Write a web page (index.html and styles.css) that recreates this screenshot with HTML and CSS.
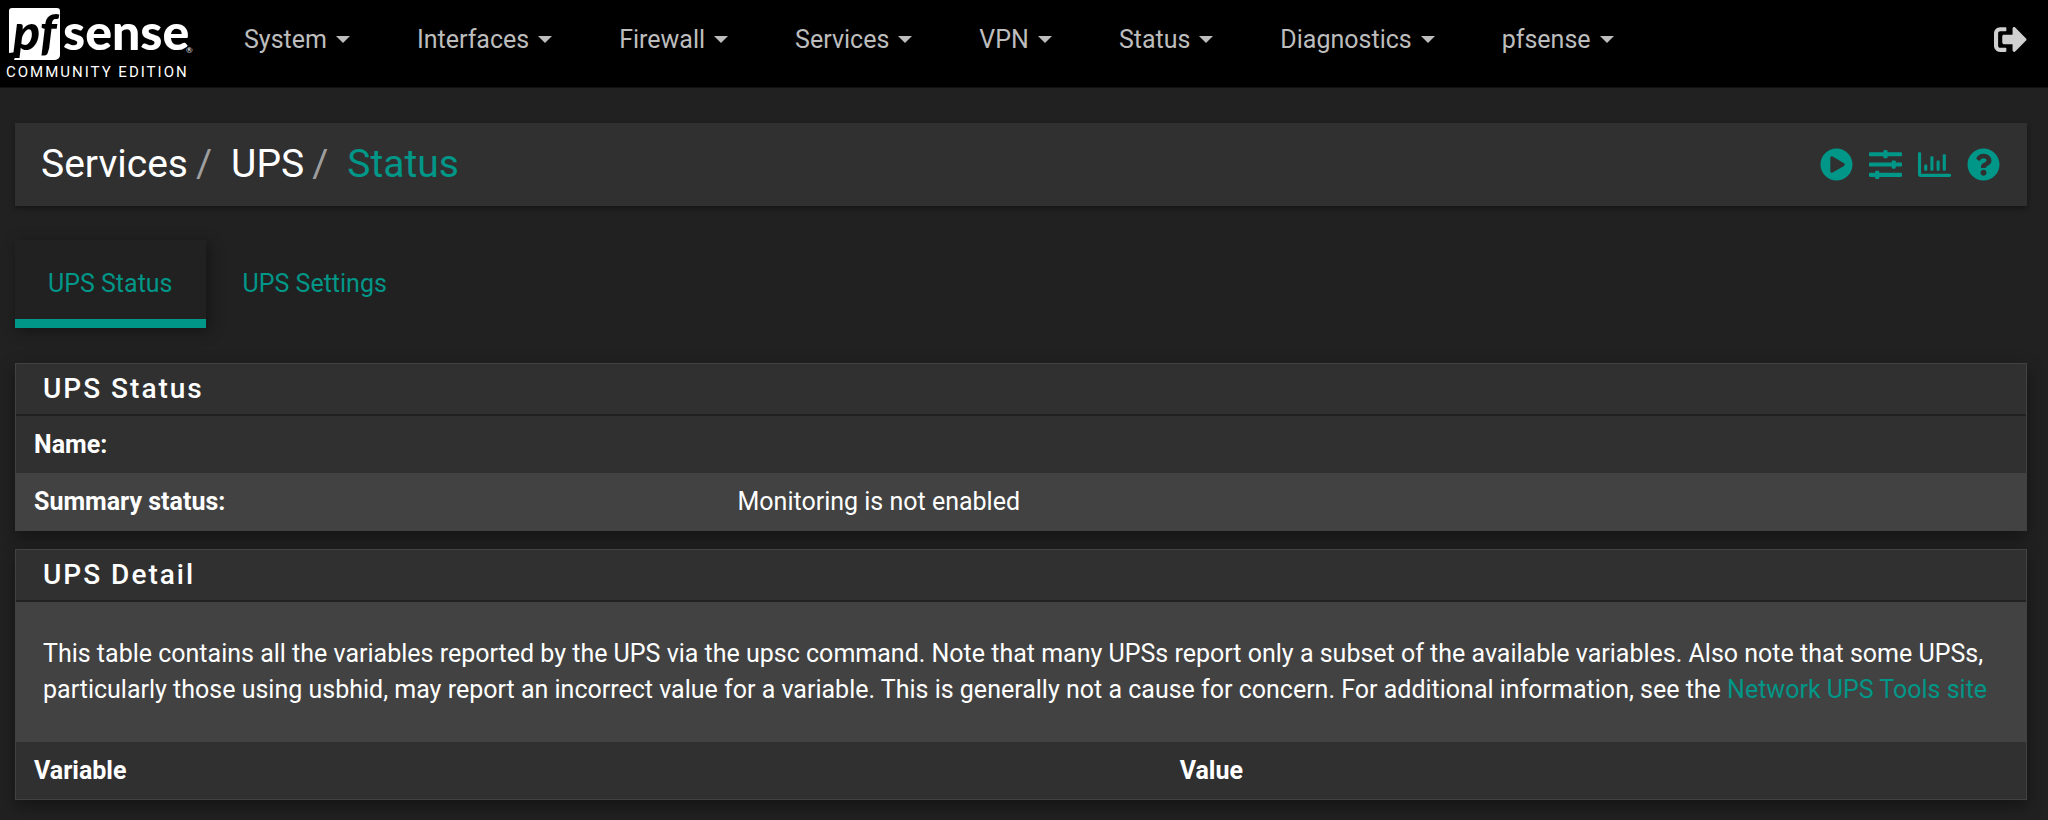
FILE: index.html
```html
<!DOCTYPE html>
<html lang="en">
<head>
    <meta charset="UTF-8">
    <meta name="viewport" content="width=device-width, initial-scale=1.0">
    <title>Services: UPS: Status</title>
    <link rel="stylesheet" href="styles.css">
</head>
<body>
    <header class="topnav">
        <a class="brand" href="#">
            <svg class="logo" viewBox="0 0 186 54" role="img" aria-label="pfSense">
                <path d="M4 1h45a3 3 0 0 1 3 3v44a5 5 0 0 1-5 5H6l3-8-8 1V4a3 3 0 0 1 3-3z" fill="#fff"/>
                <text class="logo-pf" x="5" y="43">pf</text>
                <text class="logo-sense" x="55" y="43">sense</text>
                <text class="logo-reg" x="178" y="46">®</text>
            </svg>
            <span class="edition">COMMUNITY EDITION</span>
        </a>
        <nav class="menu">
            <button class="menu-item" type="button">System<span class="caret"></span></button>
            <button class="menu-item" type="button">Interfaces<span class="caret"></span></button>
            <button class="menu-item" type="button">Firewall<span class="caret"></span></button>
            <button class="menu-item" type="button">Services<span class="caret"></span></button>
            <button class="menu-item" type="button">VPN<span class="caret"></span></button>
            <button class="menu-item" type="button">Status<span class="caret"></span></button>
            <button class="menu-item" type="button">Diagnostics<span class="caret"></span></button>
            <button class="menu-item" type="button">pfsense<span class="caret"></span></button>
        </nav>
        <a class="logout" href="#" aria-label="Logout">
            <svg class="icon" viewBox="0 0 512 512"><path d="M497 273L329 441c-15 15-41 4.500-41-17v-96H152c-13.300 0-24-10.700-24-24v-96c0-13.300 10.700-24 24-24h136V88c0-21.400 25.900-32 41-17l168 168c9.300 9.400 9.300 24.600 0 34zM192 436v-40c0-6.600-5.400-12-12-12H96c-17.700 0-32-14.300-32-32V160c0-17.700 14.300-32 32-32h84c6.600 0 12-5.400 12-12V76c0-6.600-5.400-12-12-12H96c-53 0-96 43-96 96v192c0 53 43 96 96 96h84c6.600 0 12-5.400 12-12z"/></svg>
        </a>
    </header>

    <main class="container">
        <div class="page-header">
            <ol class="breadcrumb">
                <li>Services</li>
                <li><a href="#">UPS</a></li>
                <li><a class="current" href="#">Status</a></li>
            </ol>
            <div class="context-links">
                <a href="#" aria-label="Start service">
                    <svg class="icon" viewBox="0 0 512 512"><path d="M256 8C119 8 8 119 8 256s111 248 248 248 248-111 248-248S393 8 256 8zm115.700 272l-176 101c-15.800 8.800-35.700-2.500-35.700-21V152c0-18.400 19.800-29.800 35.700-21l176 107c16.400 9.200 16.400 32.900 0 42z"/></svg>
                </a>
                <a href="#" aria-label="Related settings">
                    <svg class="icon" viewBox="0 0 512 512"><path d="M496 384H160v-16c0-8.800-7.200-16-16-16h-32c-8.800 0-16 7.200-16 16v16H16c-8.800 0-16 7.200-16 16v32c0 8.800 7.200 16 16 16h80v16c0 8.800 7.200 16 16 16h32c8.800 0 16-7.200 16-16v-16h336c8.800 0 16-7.200 16-16v-32c0-8.800-7.200-16-16-16zm0-160h-80v-16c0-8.800-7.200-16-16-16h-32c-8.800 0-16 7.200-16 16v16H16c-8.800 0-16 7.200-16 16v32c0 8.800 7.200 16 16 16h336v16c0 8.800 7.200 16 16 16h32c8.800 0 16-7.200 16-16v-16h80c8.800 0 16-7.200 16-16v-32c0-8.800-7.200-16-16-16zm0-160H288V48c0-8.800-7.200-16-16-16h-32c-8.800 0-16 7.200-16 16v16H16C7.200 64 0 71.200 0 80v32c0 8.800 7.200 16 16 16h208v16c0 8.800 7.200 16 16 16h32c8.800 0 16-7.200 16-16v-16h208c8.800 0 16-7.200 16-16V80c0-8.800-7.200-16-16-16z"/></svg>
                </a>
                <a href="#" aria-label="Related status">
                    <svg class="icon" viewBox="0 0 512 512"><path d="M397 352h22q13 0 13-13V109q0-13-13-13h-22q-13 0-13 13v230q0 13 13 13zM205 352h22q13 0 13-13V141q0-13-13-13h-22q-13 0-13 13v198q0 13 13 13zM301 352h22q13 0 13-13V205q0-13-13-13h-22q-13 0-13 13v134q0 13 13 13zM109 352h22q13 0 13-13v-70q0-13-13-13h-22q-13 0-13 13v70q0 13 13 13zM496 400H48V80q0-16-16-16H16Q0 64 0 80v336q0 32 32 32h464q16 0 16-16v-16q0-16-16-16z"/></svg>
                </a>
                <a href="#" aria-label="Help">
                    <svg class="icon" viewBox="0 0 512 512"><path d="M504 256c0 137-111 248-248 248S8 393 8 256C8 119 119 8 256 8s248 111 248 248zM262.700 90c-54.500 0-89.300 23-116.600 63.800-3.500 5.300-2.300 12.400 2.700 16.200l34.700 26.300c5.200 4 12.600 3 16.700-2.100 17.800-22.700 30.100-35.800 57.300-35.800 20.400 0 45.700 13.100 45.700 33 0 15-12.400 22.600-32.500 34C247.100 238.500 216 255 216 296v4c0 6.600 5.400 12 12 12h56c6.600 0 12-5.400 12-12v-1.300c0-28.500 83.200-29.700 83.200-106.700 0-58-60.200-102-116.500-102zM256 338c-25.400 0-46 20.600-46 46s20.600 46 46 46 46-20.600 46-46-20.600-46-46-46z"/></svg>
                </a>
            </div>
        </div>

        <nav class="tabs">
            <a class="tab active" href="#">UPS Status</a>
            <a class="tab" href="#">UPS Settings</a>
        </nav>

        <section class="panel">
            <h2 class="panel-heading">UPS Status</h2>
            <table class="table status-table">
                <tbody>
                    <tr><th scope="row">Name:</th><td></td></tr>
                    <tr><th scope="row">Summary status:</th><td>Monitoring is not enabled</td></tr>
                </tbody>
            </table>
        </section>

        <section class="panel">
            <h2 class="panel-heading">UPS Detail</h2>
            <p class="panel-text">This table contains all the variables reported by the UPS via the upsc command. Note that many UPSs report only a subset of the available variables. Also note that some UPSs, particularly those using usbhid, may report an incorrect value for a variable. This is generally not a cause for concern. For additional information, see the <a href="#">Network UPS Tools site</a></p>
            <table class="table detail-table">
                <thead>
                    <tr><th scope="col">Variable</th><th scope="col">Value</th></tr>
                </thead>
            </table>
        </section>
    </main>
</body>
</html>
```

FILE: styles.css
```css
* {
    box-sizing: border-box;
}

body {
    margin: 0;
    background-color: #212121;
    color: #fff;
    font-family: Roboto, "Liberation Sans", sans-serif;
    font-size: 25px;
    line-height: 36px;
}

a {
    color: #009688;
    text-decoration: none;
}

.icon {
    display: block;
    width: 33px;
    height: 33px;
    fill: currentColor;
}

/* Top navigation */
.topnav {
    display: flex;
    align-items: center;
    height: 88px;
    padding: 0 21px 8px 6px;
    background-color: #000;
    border-bottom: 1px solid #111;
}

.brand {
    display: flex;
    flex-direction: column;
    align-self: flex-start;
    width: 204px;
    padding-top: 7px;
    color: #fff;
}

.logo {
    display: block;
    width: 186px;
    height: 54px;
    margin-left: 2px;
    overflow: visible;
}

.logo text {
    font-family: Lato, sans-serif;
    font-weight: 900;
    fill: #fff;
}

.logo .logo-pf {
    font-size: 50px;
    font-style: italic;
    fill: #000;
}

.logo-sense {
    font-size: 50px;
}

.logo .logo-reg {
    font-size: 8px;
    font-weight: 400;
}

.edition {
    font-size: 15px;
    line-height: 22px;
    letter-spacing: 2px;
    white-space: nowrap;
}

.menu {
    display: flex;
    flex: 1;
}

.menu-item {
    display: flex;
    align-items: center;
    gap: 9px;
    padding: 0 33px 0 34px;
    border: 0;
    background: none;
    color: #bdbdbd;
    font: inherit;
    cursor: pointer;
}

.caret {
    border-top: 7px solid;
    border-left: 7px solid transparent;
    border-right: 7px solid transparent;
}

.logout {
    color: #d0d0d0;
}

.container {
    padding: 35px 21px 20px 15px;
}

/* Breadcrumb bar */
.page-header {
    display: flex;
    align-items: center;
    justify-content: space-between;
    padding: 18px 27px 18px 26px;
    background-color: #303030;
    box-shadow: 0 2px 5px rgba(0, 0, 0, 0.4);
}

.breadcrumb {
    display: flex;
    margin: 0;
    padding: 0;
    list-style: none;
    font-size: 39px;
    line-height: 47px;
}

.breadcrumb a {
    color: #fff;
}

.breadcrumb .current {
    color: #009688;
}

.breadcrumb li + li::before {
    content: "/";
    padding: 0 19px 0 8px;
    color: #9e9e9e;
}

.context-links {
    display: flex;
    gap: 16px;
}

/* Tabs */
.tabs {
    display: flex;
    gap: 4px;
    margin: 34px 0 35px;
}

.tab {
    padding: 26px 33px 17px;
    border-bottom: 9px solid transparent;
}

.tab.active {
    border-bottom-color: #009688;
    box-shadow: 3px 3px 14px rgba(0, 0, 0, 0.4);
}

/* Panels */
.panel {
    margin-bottom: 18px;
    border: 1px solid #424242;
    background-color: #303030;
    box-shadow: 0 6px 16px rgba(0, 0, 0, 0.4);
}

.panel-heading {
    margin: 0;
    padding: 7px 27px;
    border-bottom: 2px solid #212121;
    font-size: 28px;
    font-weight: 500;
    line-height: 36px;
    letter-spacing: 2px;
}

.panel-text {
    margin: 0;
    padding: 34px 27px;
    background-color: #424242;
}

.table {
    width: 100%;
    border-collapse: collapse;
    table-layout: fixed;
}

.table th,
.table td {
    padding: 11px 18px 10px;
    text-align: left;
}

.status-table th {
    width: 35%;
}

.status-table tr:nth-child(even) {
    background-color: #424242;
}

.detail-table th:first-child {
    width: 57%;
}
```
